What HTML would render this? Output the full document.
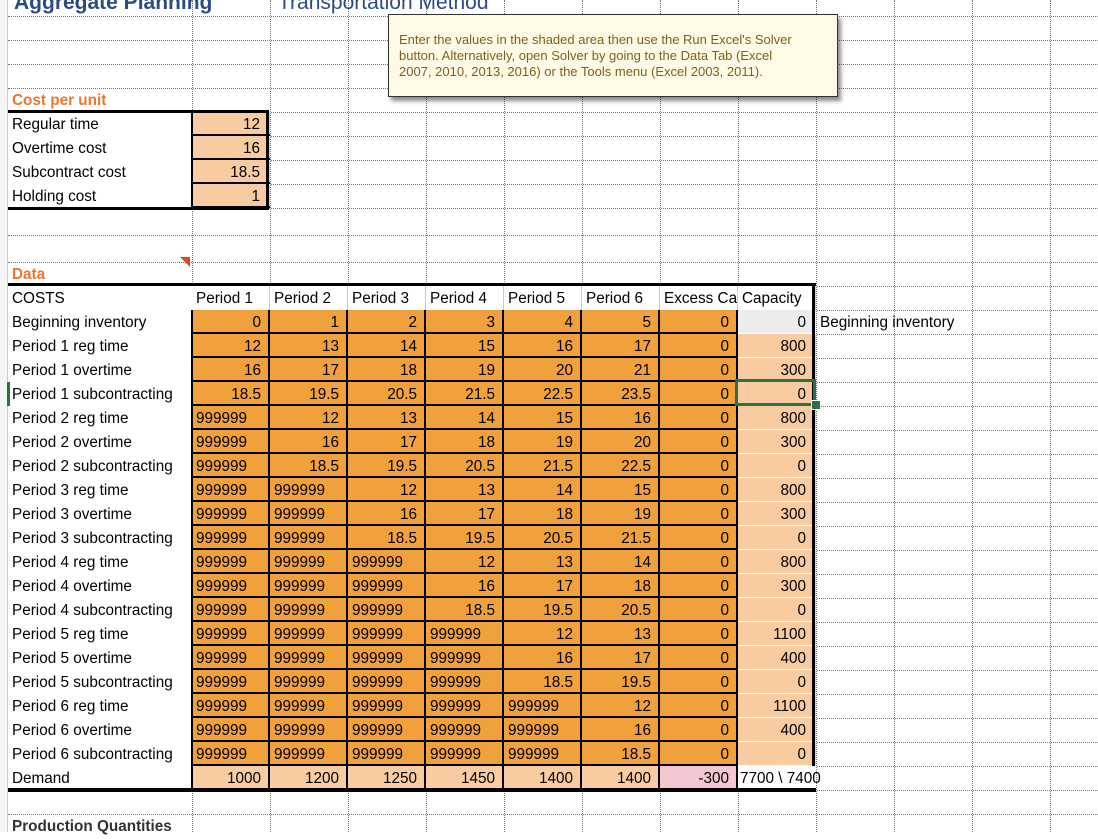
<!DOCTYPE html>
<html><head><meta charset="utf-8"><style>
body{margin:0;width:1098px;height:832px;overflow:hidden;background:#fff;font-family:"Liberation Sans",Arial,sans-serif;position:relative}
.c{position:absolute;box-sizing:border-box;font-size:15.3px;line-height:26px;white-space:nowrap;overflow:visible;color:#000;padding:0 4px}
.r{text-align:right;padding-right:7px}
.vl{position:absolute;top:0;height:832px;width:0;border-left:1px dotted #777}
.hl{position:absolute;left:8px;width:1090px;height:0;border-top:1px dotted #777}
.b{position:absolute;background:#000}
</style></head><body>
<div id="g"></div>
<script>
var g=document.getElementById('g');
var cx=[8,192,270,348,426,504,582,660,738,816,894,972,1050,1128];
var ry=[-8,16,40,64,88,112,136,160,184,208,235,262,286];
for(var i=0;i<22;i++)ry.push(310+i*24);
var h='';
h+='<div style="position:absolute;left:0;top:0;width:7px;height:832px;background:#f4f4f4;border-right:1px solid #ccc"></div>';
for(var k=1;k<cx.length;k++)h+='<div class="vl" style="left:'+cx[k]+'px"></div>';
for(var k=1;k<ry.length;k++)h+='<div class="hl" style="top:'+ry[k]+'px"></div>';
function cell(col,row,txt,bg,cls,extra){
 var x=cx[col],w=cx[col+1]-cx[col],y=ry[row],hh=ry[row+1]-ry[row];
 h+='<div class="c '+(cls||'')+'" style="left:'+x+'px;top:'+y+'px;width:'+w+'px;height:'+hh+'px;'+(bg?'background:'+bg+';':'')+(extra||'')+'">'+txt+'</div>';
}
h+='<div class="c" style="left:10px;top:-9px;font-size:21px;line-height:24px;font-weight:bold;color:#2c4a86">Aggregate Planning</div>';
h+='<div class="c" style="left:274px;top:-9px;font-size:21px;line-height:24px;color:#2c4a86">Transportation Method</div>';
cell(0,4,'Cost per unit','', '', 'color:#ee7630;font-weight:bold;');
var lo='#f8cba0',dk='#f0a13c';
var cp=[['Regular time','12'],['Overtime cost','16'],['Subcontract cost','18.5'],['Holding cost','1']];
for(var i=0;i<4;i++){cell(0,5+i,cp[i][0],'#fff');cell(1,5+i,cp[i][1],lo,'r','border-bottom:2px solid #000;padding-right:10px;');}
h+='<div class="b" style="left:8px;top:110px;width:261px;height:3px"></div>';
h+='<div class="b" style="left:8px;top:207px;width:261px;height:3px"></div>';
h+='<div class="b" style="left:191px;top:110px;width:2px;height:100px"></div>';
h+='<div class="b" style="left:266px;top:110px;width:3px;height:100px"></div>';
cell(0,11,'Data','', '', 'color:#ee7630;font-weight:bold;');
h+='<div style="position:absolute;left:180px;top:257px;width:0;height:0;border-left:10px solid transparent;border-top:10px solid #e8432a"></div>';
var hd=['COSTS','Period 1','Period 2','Period 3','Period 4','Period 5','Period 6','Excess Ca','Capacity'];
for(var i=0;i<9;i++)cell(i,12,hd[i],'#fff','', (i>0?'border-right:1px solid #ccc;overflow:hidden;':''));
var rows=[['Beginning inventory',['0','1','2','3','4','5'],'0'],
['Period 1 reg time',['12','13','14','15','16','17'],'800'],
['Period 1 overtime',['16','17','18','19','20','21'],'300'],
['Period 1 subcontracting',['18.5','19.5','20.5','21.5','22.5','23.5'],'0']];
var caps=[['800','300','0'],['800','300','0'],['800','300','0'],['1100','400','0'],['1100','400','0']];
for(var p=2;p<=6;p++){
 var base=[[12,13,14,15,16],[16,17,18,19,20],[18.5,19.5,20.5,21.5,22.5]];
 var nm=['reg time','overtime','subcontracting'];
 for(var t=0;t<3;t++){
  var v=[];for(var j=0;j<6;j++){v.push(j<p-1?'999999':String(base[t][j-(p-1)]));}
  rows.push(['Period '+p+' '+nm[t],v,caps[p-2][t]]);
 }
}
for(var i=0;i<rows.length;i++){
 var R=13+i;cell(0,R,rows[i][0],'#fff');
 for(var j=0;j<6;j++){var v=rows[i][1][j];cell(1+j,R,v,dk,v=='999999'?'':'r','border-right:2px solid #000;border-bottom:2px solid #000;');}
 cell(7,R,'0',dk,'r','border-right:2px solid #000;border-bottom:2px solid #000;');
 cell(8,R,rows[i][2],i==0?'#ececec':lo,'r','border-bottom:1px solid #fff;padding-right:10px;');
}
cell(9,13,'Beginning inventory','','','');
var dm=['1000','1200','1250','1450','1400','1400'];
cell(0,32,'Demand','#fff');
for(var j=0;j<6;j++)cell(1+j,32,dm[j],lo,'r','border-right:2px solid #000;');
cell(7,32,'-300','#f4c7d0','r','border-right:2px solid #000;');
cell(8,32,'7700 \\ 7400','#fff','','padding-left:2px;');
cell(0,34,'Production Quantities','','', 'font-weight:bold;color:#333;');
h+='<div class="b" style="left:8px;top:283px;width:808px;height:3px"></div>';
h+='<div class="b" style="left:812px;top:283px;width:3px;height:483px"></div>';
h+='<div class="b" style="left:8px;top:788px;width:808px;height:4px"></div>';
h+='<div class="b" style="left:191px;top:310px;width:2px;height:480px"></div>';
h+='<div style="position:absolute;left:735px;top:379px;width:81px;height:27px;box-sizing:border-box;border:3px solid #2f6f45"></div>';
h+='<div style="position:absolute;left:811px;top:400px;width:8px;height:8px;background:#2f6f45;border:1px solid #fff"></div>';
h+='<div style="position:absolute;left:7px;top:382px;width:3px;height:24px;background:#2f6f45"></div>';
h+='<div style="position:absolute;left:388px;top:14px;width:450px;height:83px;box-sizing:border-box;background:#fdfbe6;border:1px solid #333;box-shadow:3px 4px 4px rgba(0,0,0,.45);padding:17px 10px 0 10px;font-family:\'Liberation Sans\',Arial,sans-serif;font-size:13px;line-height:16px;color:#7f5f1f">Enter the values in the shaded area then use the Run Excel\'s Solver<br>button. Alternatively, open Solver by going to the Data Tab (Excel<br>2007, 2010, 2013, 2016) or the Tools menu (Excel 2003, 2011).</div>';
g.innerHTML=h;
</script>
</body></html>
